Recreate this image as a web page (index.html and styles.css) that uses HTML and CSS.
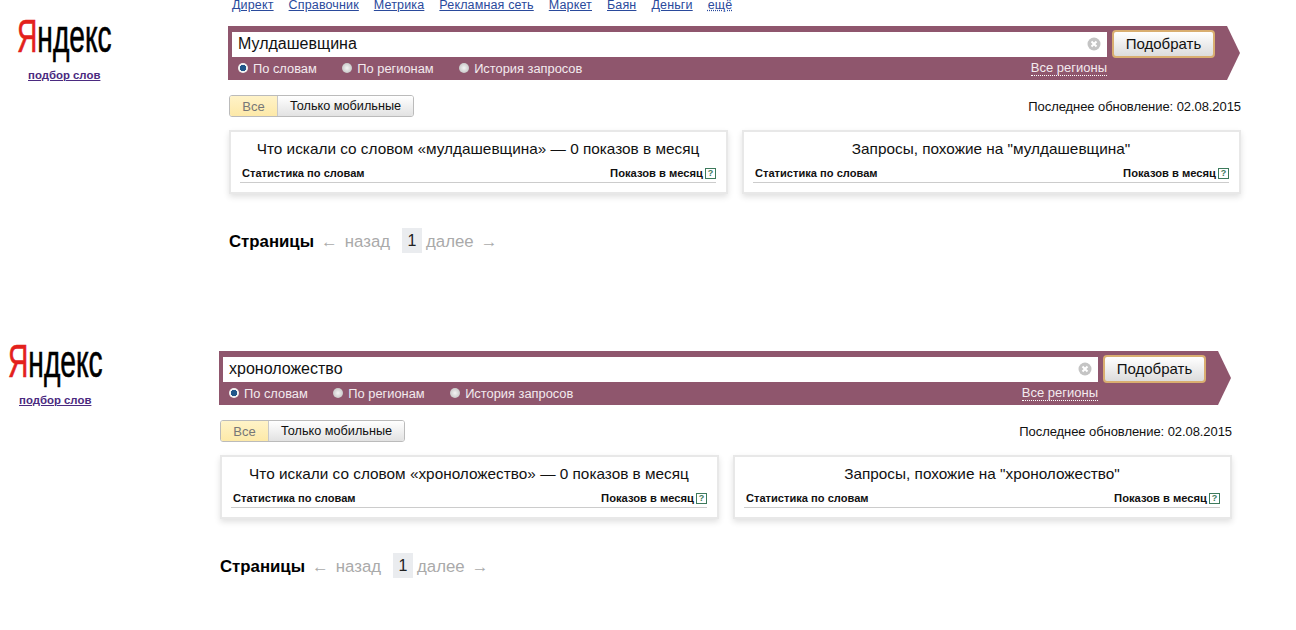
FILE: index.html
```html
<!DOCTYPE html>
<html lang="ru">
<head>
    <meta charset="UTF-8">
    <title>Подбор слов</title>
    <link rel="stylesheet" href="styles.css">
</head>
<body>
    <div class="wordstat wordstat-first">
        <div class="logo-col">
            <div class="logo"><span class="logo-red">Я</span>ндекс</div>
            <a class="logo-link" href="#">подбор слов</a>
        </div>
        <div class="main">
            <nav class="top-nav">
                <a href="#">Директ</a>
                <a href="#">Справочник</a>
                <a href="#">Метрика</a>
                <a href="#">Рекламная сеть</a>
                <a href="#">Маркет</a>
                <a href="#">Баян</a>
                <a href="#">Деньги</a>
                <a href="#" class="more">ещё</a>
            </nav>
            <form class="search-bar">
                <div class="search-row">
                    <div class="search-input">
                        <span class="search-text">Мулдашевщина</span>
                        <span class="clear-icon">
                            <svg width="14" height="14" viewBox="0 0 14 14"><circle cx="7" cy="7" r="6.5" fill="#c4c4c4"/><path d="M4.5 4.5l5 5M9.5 4.5l-5 5" stroke="#fff" stroke-width="2"/></svg>
                        </span>
                    </div>
                    <button type="button" class="search-button">Подобрать</button>
                </div>
                <div class="options-row">
                    <label class="option"><span class="radio radio-on"></span>По словам</label>
                    <label class="option option-next"><span class="radio"></span>По регионам</label>
                    <label class="option option-next"><span class="radio"></span>История запросов</label>
                    <a href="#" class="all-regions">Все регионы</a>
                </div>
            </form>
            <div class="filter-row">
                <div class="switch">
                    <span class="switch-item switch-active">Все</span>
                    <span class="switch-item">Только мобильные</span>
                </div>
                <div class="updated">Последнее обновление: 02.08.2015</div>
            </div>
            <div class="cards">
                <div class="card">
                    <div class="card-title">Что искали со словом «мулдашевщина» — 0 показов в месяц</div>
                    <div class="card-head">
                        <span>Статистика по словам</span>
                        <span class="shows">Показов в месяц<span class="help">?</span></span>
                    </div>
                </div>
                <div class="card">
                    <div class="card-title">Запросы, похожие на "мулдашевщина"</div>
                    <div class="card-head">
                        <span>Статистика по словам</span>
                        <span class="shows">Показов в месяц<span class="help">?</span></span>
                    </div>
                </div>
            </div>
            <div class="pager">
                <b class="pager-title">Страницы</b>
                <span class="pager-arrow">←</span>
                <span class="pager-back">назад</span>
                <span class="pager-current">1</span>
                <span class="pager-next">далее</span>
                <span class="pager-arrow">→</span>
            </div>
        </div>
    </div>

    <div class="wordstat wordstat-second">
        <div class="logo-col">
            <div class="logo"><span class="logo-red">Я</span>ндекс</div>
            <a class="logo-link" href="#">подбор слов</a>
        </div>
        <div class="main">
            <form class="search-bar">
                <div class="search-row">
                    <div class="search-input">
                        <span class="search-text">хроноложество</span>
                        <span class="clear-icon">
                            <svg width="14" height="14" viewBox="0 0 14 14"><circle cx="7" cy="7" r="6.5" fill="#c4c4c4"/><path d="M4.5 4.5l5 5M9.5 4.5l-5 5" stroke="#fff" stroke-width="2"/></svg>
                        </span>
                    </div>
                    <button type="button" class="search-button">Подобрать</button>
                </div>
                <div class="options-row">
                    <label class="option"><span class="radio radio-on"></span>По словам</label>
                    <label class="option option-next"><span class="radio"></span>По регионам</label>
                    <label class="option option-next"><span class="radio"></span>История запросов</label>
                    <a href="#" class="all-regions">Все регионы</a>
                </div>
            </form>
            <div class="filter-row">
                <div class="switch">
                    <span class="switch-item switch-active">Все</span>
                    <span class="switch-item">Только мобильные</span>
                </div>
                <div class="updated">Последнее обновление: 02.08.2015</div>
            </div>
            <div class="cards">
                <div class="card">
                    <div class="card-title">Что искали со словом «хроноложество» — 0 показов в месяц</div>
                    <div class="card-head">
                        <span>Статистика по словам</span>
                        <span class="shows">Показов в месяц<span class="help">?</span></span>
                    </div>
                </div>
                <div class="card">
                    <div class="card-title">Запросы, похожие на "хроноложество"</div>
                    <div class="card-head">
                        <span>Статистика по словам</span>
                        <span class="shows">Показов в месяц<span class="help">?</span></span>
                    </div>
                </div>
            </div>
            <div class="pager">
                <b class="pager-title">Страницы</b>
                <span class="pager-arrow">←</span>
                <span class="pager-back">назад</span>
                <span class="pager-current">1</span>
                <span class="pager-next">далее</span>
                <span class="pager-arrow">→</span>
            </div>
        </div>
    </div>
</body>
</html>
```

FILE: styles.css
```css
* {
    box-sizing: border-box;
    margin: 0;
    padding: 0;
}

html, body {
    height: 630px;
    overflow: hidden;
}

body {
    background-color: #fff;
    color: #111;
    font-family: "Liberation Sans", Arial, sans-serif;
    font-size: 13px;
}

.wordstat {
    display: flex;
}

.wordstat-first {
    padding-left: 17px;
}

.wordstat-second {
    padding-left: 8px;
    margin-top: 98px;
}

.logo-col {
    width: 211px;
    flex: none;
    padding-top: 12px;
}

.wordstat-second .logo-col {
    margin-top: -26px;
}

.logo {
    width: 95px;
    font-size: 46px;
    line-height: 48px;
    color: #000;
    white-space: nowrap;
    -webkit-text-stroke: 0.6px currentColor;
    transform: scaleX(0.612);
    transform-origin: left center;
}

.logo-red {
    color: #e3211c;
}

.logo-link {
    display: block;
    margin: 9px 0 0 11px;
    color: #4b2a80;
    font-size: 11.4px;
    font-weight: bold;
}

.main {
    width: 1013px;
    flex: none;
}

.top-nav {
    display: flex;
    gap: 15px;
    height: 26px;
    padding-left: 4px;
    font-size: 12.5px;
    letter-spacing: 0.15px;
    line-height: 11px;
}

.top-nav a {
    color: #2a4a9c;
}

.top-nav .more {
    text-decoration: underline dotted;
}

.search-bar {
    height: 54px;
    padding: 4px 0 0 4px;
    background-color: #8f566d;
    clip-path: polygon(0 0, 999px 0, 1012px 27px, 999px 54px, 0 54px);
}

.search-row {
    display: flex;
    align-items: flex-start;
    gap: 5px;
}

.search-input {
    width: 875px;
    height: 25px;
    margin-top: 2px;
    padding: 0 6px 2px;
    display: flex;
    align-items: center;
    justify-content: space-between;
    background-color: #fff;
    color: #111;
    font-size: 16px;
}

.clear-icon {
    display: flex;
}

.search-button {
    width: 103px;
    height: 28px;
    padding-bottom: 2px;
    border: 2px solid #d9ae70;
    border-radius: 4px;
    background: linear-gradient(#fff, #dcdcdc);
    color: #111;
    font-family: inherit;
    font-size: 15px;
}

.options-row {
    display: flex;
    align-items: center;
    height: 16px;
    margin-top: 2px;
    padding-left: 6px;
    color: #f3eaee;
    font-size: 12.85px;
}

.option {
    display: flex;
    align-items: center;
    gap: 5px;
}

.option-next {
    margin-left: 25.5px;
}

.radio {
    width: 10px;
    height: 10px;
    border-radius: 50%;
    background: radial-gradient(#f4f4f4, #b9b9b9);
}

.radio-on {
    background: radial-gradient(#20578a 0 3px, #f2f2f2 3.5px);
}

.all-regions {
    margin-left: auto;
    margin-right: 134px;
    font-size: 13px;
    color: #f3eaee;
    text-decoration: none;
    border-bottom: 1px dotted #fff;
}

.filter-row {
    display: flex;
    justify-content: space-between;
    align-items: center;
    height: 22px;
    margin-top: 15px;
    padding-left: 1px;
}

.switch {
    display: flex;
    height: 22px;
    border: 1px solid #bbb;
    border-radius: 3px;
    overflow: hidden;
    font-size: 12.7px;
}

.switch-item {
    padding: 0 12px;
    line-height: 20px;
    background: linear-gradient(#fff, #e2e2e2);
}

.switch-active {
    width: 48px;
    padding: 1px 0 0;
    color: #777;
    text-align: center;
    font-size: 13px;
    background: linear-gradient(#fff3c8, #fde9a8);
    border-right: 1px solid #c8c8c8;
}

.updated {
    font-size: 13px;
    letter-spacing: -0.07px;
}

.cards {
    display: grid;
    grid-template-columns: 499px 499px;
    gap: 14px;
    margin: 13px 0 0 1px;
}

.card {
    height: 64px;
    padding: 0 10px 0 9px;
    border: 2px solid #e8e8e8;
    box-shadow: 0 3px 6px rgba(0, 0, 0, 0.12);
}

.card-title {
    margin-top: 7px;
    text-align: center;
    font-size: 15.35px;
    line-height: 20px;
}

.card-head {
    display: flex;
    justify-content: space-between;
    margin-top: 8px;
    padding: 0 0 2px 2px;
    border-bottom: 1px solid #ccc;
    font-size: 11.1px;
    font-weight: bold;
    line-height: 13px;
}

.shows {
    display: flex;
    align-items: center;
    gap: 2px;
    font-size: 11.2px;
}

.help {
    display: inline-block;
    width: 11px;
    height: 11px;
    border: 1px solid #3d7a5c;
    color: #3d7a5c;
    font-size: 9px;
    line-height: 9px;
    text-align: center;
}

.pager {
    display: flex;
    height: 25px;
    margin: 34px 0 0 1px;
    color: #aaa;
    font-size: 16.8px;
    line-height: 27px;
}

.pager-title {
    color: #000;
    margin-right: 7px;
}

.pager-back {
    margin: 0 12px 0 7px;
}

.pager-current {
    width: 20px;
    height: 25px;
    margin-right: 4px;
    background-color: #eaecef;
    color: #222;
    font-size: 16px;
    line-height: 26px;
    text-align: center;
}

.pager-next {
    margin-right: 7px;
}
```
